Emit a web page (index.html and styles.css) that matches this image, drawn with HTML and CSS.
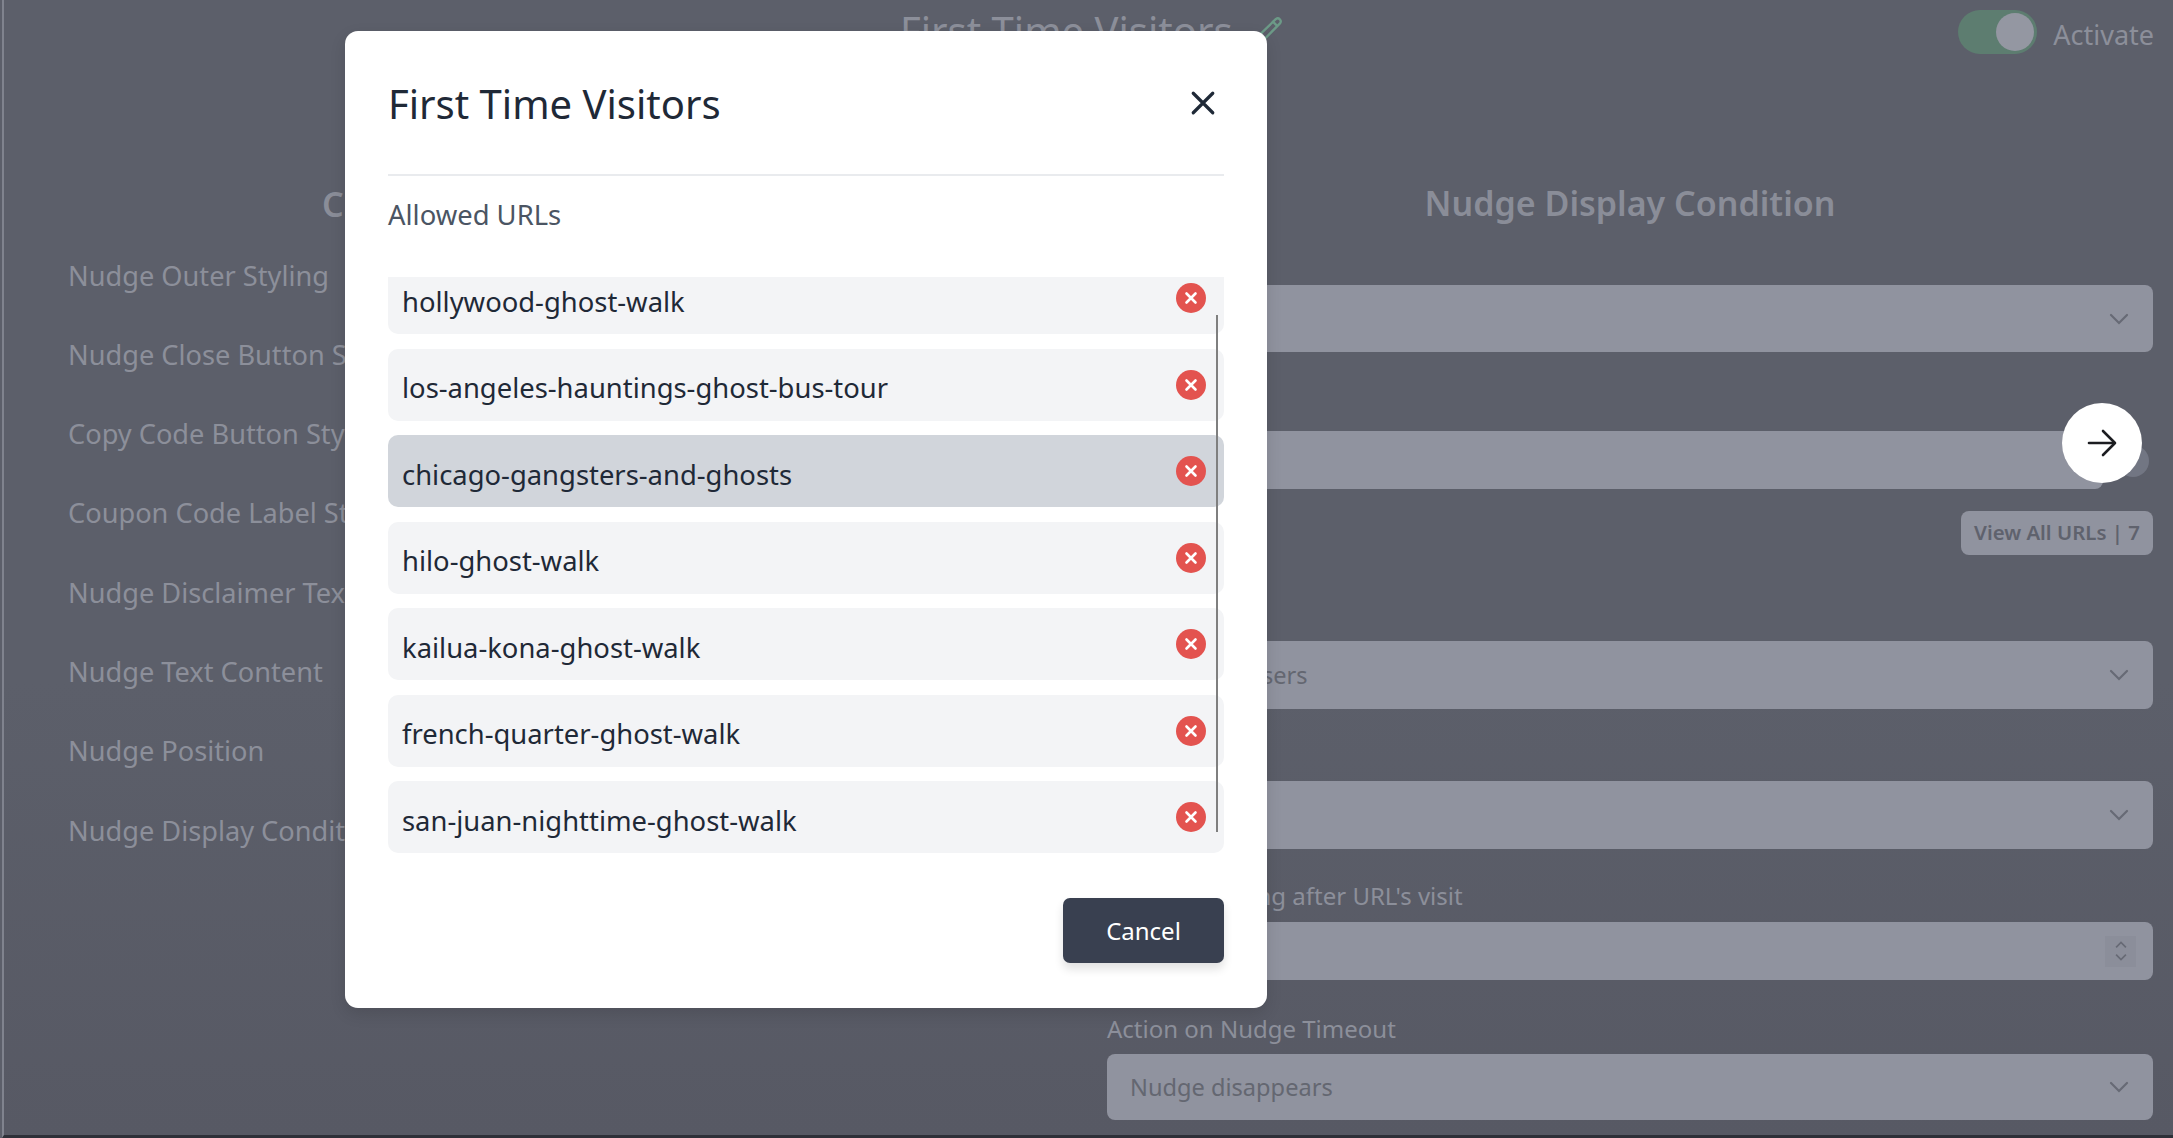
FILE: index.html
```html
<!DOCTYPE html>
<html lang="en">
<head>
<meta charset="utf-8">
<title>First Time Visitors</title>
<link rel="stylesheet" href="styles.css">
</head>
<body>
<div class="page">
  <header class="topbar">
    <div class="page-title">
      <span>First Time Visitors</span>
      <svg class="pencil" viewBox="0 0 24 24" fill="none" stroke="currentColor" stroke-width="2" stroke-linecap="round" stroke-linejoin="round"><path d="M18 2.5a2.6 2.6 0 0 1 3.6 3.6L7 21l-5 1 1-5z"/><path d="M15.5 5l3.5 3.5"/></svg>
    </div>
    <div class="activate">
      <span class="toggle"><span class="thumb"></span></span>
      <span class="activate-label">Activate</span>
    </div>
  </header>
  <main class="columns">
    <section class="left">
      <h2 class="left-heading">Configuration</h2>
      <nav class="nav">
        <div>Nudge Outer Styling</div>
        <div>Nudge Close Button Styling</div>
        <div>Copy Code Button Styling</div>
        <div>Coupon Code Label Styling</div>
        <div>Nudge Disclaimer Text</div>
        <div>Nudge Text Content</div>
        <div>Nudge Position</div>
        <div>Nudge Display Condition</div>
      </nav>
    </section>
    <section class="right">
      <h2 class="right-heading">Nudge Display Condition</h2>
      <div class="field f1"><svg class="chev" viewBox="0 0 20 12"><path d="M2 2l8 8 8-8"/></svg></div>
      <div class="field f2"></div>
      <div class="view-row"><span class="view-all">View All URLs | 7</span></div>
      <div class="field f3"><span>First Time Users</span><svg class="chev" viewBox="0 0 20 12"><path d="M2 2l8 8 8-8"/></svg></div>
      <div class="field f4"><svg class="chev" viewBox="0 0 20 12"><path d="M2 2l8 8 8-8"/></svg></div>
      <label class="label l5">Nudge Showing after URL's visit</label>
      <div class="field f5">
        <span class="spinner">
          <svg viewBox="0 0 20 12"><path d="M3 10l7-7 7 7"/></svg>
          <svg viewBox="0 0 20 12"><path d="M3 2l7 7 7-7"/></svg>
        </span>
      </div>
      <label class="label l6">Action on Nudge Timeout</label>
      <div class="field f6"><span>Nudge disappears</span><svg class="chev" viewBox="0 0 20 12"><path d="M2 2l8 8 8-8"/></svg></div>
    </section>
  </main>
</div>

<span class="dot"></span>
<button class="next" aria-label="Next">
  <svg viewBox="0 0 32 32" fill="none" stroke="#1c1d21" stroke-width="2.6" stroke-linecap="round" stroke-linejoin="round"><path d="M3 16h25"/><path d="M17 4l12 12-12 12"/></svg>
</button>

<div class="modal">
  <div class="modal-head">
    <h1>First Time Visitors</h1>
    <svg class="close" viewBox="0 0 24 24" fill="none" stroke="#1f2937" stroke-width="3" stroke-linecap="round"><path d="M3 3l18 18M21 3L3 21"/></svg>
  </div>
  <div class="modal-sub">Allowed URLs</div>
  <div class="list">
    <div class="list-inner">
      <div class="row"><span>hollywood-ghost-walk</span><svg class="x" viewBox="0 0 30 30"><circle cx="15" cy="15" r="15"/><path d="M10.5 10.5l9 9M19.5 10.5l-9 9"/></svg></div>
      <div class="row"><span>los-angeles-hauntings-ghost-bus-tour</span><svg class="x" viewBox="0 0 30 30"><circle cx="15" cy="15" r="15"/><path d="M10.5 10.5l9 9M19.5 10.5l-9 9"/></svg></div>
      <div class="row row-active"><span>chicago-gangsters-and-ghosts</span><svg class="x" viewBox="0 0 30 30"><circle cx="15" cy="15" r="15"/><path d="M10.5 10.5l9 9M19.5 10.5l-9 9"/></svg></div>
      <div class="row"><span>hilo-ghost-walk</span><svg class="x" viewBox="0 0 30 30"><circle cx="15" cy="15" r="15"/><path d="M10.5 10.5l9 9M19.5 10.5l-9 9"/></svg></div>
      <div class="row"><span>kailua-kona-ghost-walk</span><svg class="x" viewBox="0 0 30 30"><circle cx="15" cy="15" r="15"/><path d="M10.5 10.5l9 9M19.5 10.5l-9 9"/></svg></div>
      <div class="row"><span>french-quarter-ghost-walk</span><svg class="x" viewBox="0 0 30 30"><circle cx="15" cy="15" r="15"/><path d="M10.5 10.5l9 9M19.5 10.5l-9 9"/></svg></div>
      <div class="row"><span>san-juan-nighttime-ghost-walk</span><svg class="x" viewBox="0 0 30 30"><circle cx="15" cy="15" r="15"/><path d="M10.5 10.5l9 9M19.5 10.5l-9 9"/></svg></div>
    </div>
    <span class="scrollbar"></span>
  </div>
  <div class="modal-foot"><button class="cancel">Cancel</button></div>
</div>
</body>
</html>
```
FILE: styles.css
```css
* { box-sizing: border-box; }
html, body { margin: 0; height: 100%; overflow: hidden; }
body {
  font-family: "Noto Sans", "Open Sans", sans-serif;
  background: #5c5f6a;
  color: #8c8f9a;
  position: relative;
  padding-left: 2px;
}
.page {
  height: 1138px;
  border-left: 2px solid #80838e;
  border-bottom: 3px solid #2e3038;
  background: linear-gradient(#5c5f6a 0%, #5c5f6a 60%, #575964 100%);
  display: flex;
  flex-direction: column;
}
.topbar {
  height: 64px;
  padding: 10px 19px 0 896px;
  display: flex;
  justify-content: space-between;
  align-items: flex-start;
}
.page-title {
  display: flex;
  align-items: flex-start;
  gap: 22px;
  font-size: 40px;
  line-height: 56px;
  margin-top: -7px;
}
.pencil { width: 28px; height: 28px; margin-top: 13px; color: #6c9a87; }
.activate {
  display: flex;
  align-items: flex-start;
  gap: 16px;
  font-size: 27px;
  line-height: 44px;
}
.activate-label { margin-top: 3px; }
.toggle {
  width: 79px;
  height: 44px;
  border-radius: 22px;
  background: #5d7d70;
  display: flex;
  align-items: center;
  justify-content: flex-end;
  padding-right: 3px;
}
.thumb {
  width: 38px;
  height: 38px;
  border-radius: 50%;
  background: #9497a2;
}
.columns {
  flex: 1;
  display: flex;
}
.left {
  width: 1103px;
  flex: none;
  padding-left: 64px;
}
.left-heading {
  margin: 118px 0 0 254px;
  font-size: 34px;
  line-height: 44px;
  font-weight: 600;
  white-space: nowrap;
  color: #8a8d98;
}
.nav { margin-top: 29.5px; font-size: 27.2px; }
.nav div { height: 79.3px; line-height: 40px; white-space: nowrap; }
.right { flex: 1; padding-right: 20px; }
.right-heading {
  margin: 117px 0 0;
  font-size: 34px;
  line-height: 44px;
  font-weight: 600;
  text-align: center;
  color: #8a8d98;
}
.field {
  background: #90939f;
  border-radius: 8px;
  color: #646771;
  font-size: 23.6px;
  display: flex;
  align-items: center;
  justify-content: space-between;
  padding: 0 24px 0 23px;
}
.chev { width: 20px; height: 12px; fill: none; stroke: #676a75; stroke-width: 2.2; margin-left: auto; stroke-linecap: round; }
.f1 { height: 67px; margin-top: 60px; }
.f2 { height: 58px; margin-top: 79px; margin-right: 50px; }
.view-row { display: flex; justify-content: flex-end; margin-top: 22px; }
.view-all {
  height: 44px;
  width: 192px;
  background: #90939f;
  border-radius: 8px;
  color: #5f626d;
  font-size: 20.4px;
  font-weight: 600;
  line-height: 42px;
  text-align: center;
  white-space: nowrap;
}
.f3 { height: 68px; margin-top: 86px; }
.f4 { height: 68px; margin-top: 72px; }
.label { display: block; font-size: 24px; line-height: 34px; color: #8c8f9a; white-space: nowrap; }
.l5 { margin-top: 30px; position: relative; }
.f5 { height: 58px; margin-top: 9px; padding-right: 17px; justify-content: flex-end; }
.spinner {
  width: 31px;
  height: 31px;
  background: #8b8e9a;
  display: flex;
  flex-direction: column;
  align-items: center;
  justify-content: center;
  gap: 4px;
}
.spinner svg { width: 14px; height: 9px; fill: none; stroke: #676a75; stroke-width: 2.4; }
.l6 { margin-top: 32px; }
.f6 { height: 66px; margin-top: 8px; }
.dot {
  position: absolute;
  left: 2117px;
  top: 445px;
  width: 32px;
  height: 32px;
  border-radius: 50%;
  background: #727683;
}
.next {
  position: absolute;
  left: 2062px;
  top: 403px;
  width: 80px;
  height: 80px;
  padding: 0;
  border: 0;
  border-radius: 50%;
  background: #fff;
  display: flex;
  align-items: center;
  justify-content: center;
}
.next svg { width: 32px; height: 32px; }
.modal {
  position: absolute;
  left: 345px;
  top: 31px;
  width: 922px;
  height: 977px;
  background: #fff;
  border-radius: 13px;
  padding: 0 43px;
  box-shadow: 0 6px 16px rgba(0,0,0,.12);
  display: flex;
  flex-direction: column;
}
.modal-head {
  height: 145px;
  border-bottom: 2px solid #e9ebee;
  display: flex;
  align-items: flex-start;
  justify-content: space-between;
  padding-top: 46px;
}
.modal-head h1 {
  margin: 0;
  font-size: 40px;
  line-height: 54px;
  font-weight: 400;
  color: #1f2937;
}
.close { width: 26px; height: 26px; margin-top: 13px; margin-right: 8px; }
.modal-sub {
  margin-top: 20px;
  font-size: 27.4px;
  line-height: 38px;
  color: #4b5563;
}
.list {
  position: relative;
  margin-top: 43px;
  height: 576px;
  overflow: hidden;
}
.list-inner {
  margin-top: -15px;
  display: flex;
  flex-direction: column;
  gap: 14.5px;
}
.row {
  height: 72px;
  flex: none;
  border-radius: 10px;
  background: #f3f4f6;
  padding: 0 9px 0 14px;
  display: flex;
  justify-content: space-between;
  align-items: center;
  font-size: 27.4px;
  color: #1f2937;
}
.row span { position: relative; top: 3px; }
.row-active { background: #d1d5db; }
.x { width: 30px; height: 30px; margin-right: 9px; }
.x circle { fill: #e3534f; }
.x path { stroke: #fff; stroke-width: 2.6; stroke-linecap: round; fill: none; }
.scrollbar {
  position: absolute;
  left: 828px;
  top: 38px;
  width: 2px;
  height: 517px;
  background: #7f7f7f;
}
.modal-foot {
  display: flex;
  justify-content: flex-end;
  margin-top: 45px;
}
.cancel {
  width: 161px;
  height: 65px;
  border: 0;
  border-radius: 7px;
  background: #394050;
  color: #fff;
  font: 400 24px "Noto Sans", "Open Sans", sans-serif;
  box-shadow: 0 6px 10px rgba(0,0,0,.12);
}
```
